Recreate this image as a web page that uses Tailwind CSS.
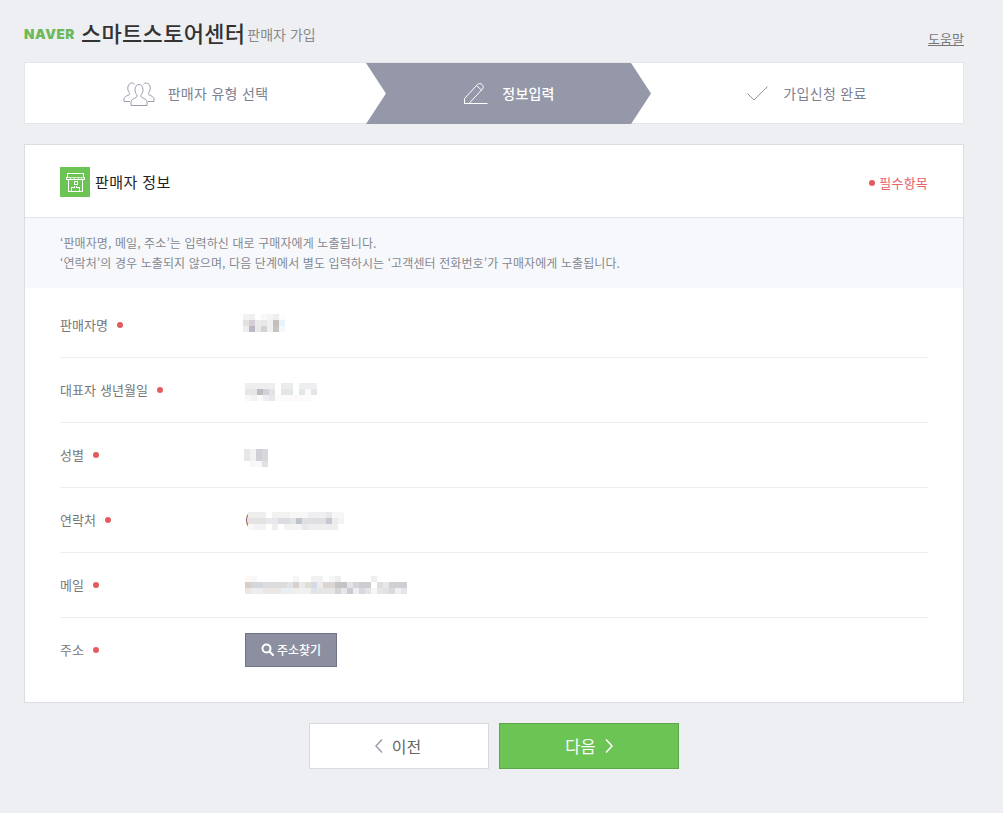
<!DOCTYPE html>
<html lang="ko">
<head>
    <meta charset="UTF-8">
    <title>스마트스토어센터 판매자 가입</title>
    <script src="https://cdn.jsdelivr.net/npm/@tailwindcss/browser@4"></script>
</head>
<body class="bg-[#eeeff3] font-['Noto_Sans_CJK_KR','Noto_Sans',sans-serif] text-[13px] text-[#777]">
<div class="w-[940px] ml-6 h-[813px]">

    <!-- header -->
    <header class="h-[62px] flex items-start">
        <span class="mt-[24px] w-[57px] font-['Inter',sans-serif] font-black text-[13.5px] leading-[20px] tracking-[0.6px] text-[#6cb85a]">NAVER</span>
        <h1 class="mt-[17px] text-[22px] leading-[30px] font-medium text-[#333] tracking-[0.3px]">스마트스토어센터</h1>
        <span class="mt-[24px] ml-[2px] text-[14px] leading-[20px] text-[#888]">판매자 가입</span>
        <a class="ml-auto mt-[29px] text-[13px] leading-[20px] text-[#777] underline">도움말</a>
    </header>

    <!-- steps -->
    <nav class="h-[62px] flex bg-white border border-[#e5e6eb]">
        <div class="w-[341px] flex items-center justify-center gap-[13px]">
            <svg width="32" height="26" viewBox="0 0 32 26" fill="none" stroke="#9a9eae" stroke-width="1">
                <path d="M7 21.500H1v-2.500c0-2 2.500-3 5-4.200 .8-.4 .8-1.800 0-2.800-1-1.200-1.200-2.500-1.200-4 0-3 1.700-5 4-5 1.200 0 2.200 .5 3 1.500"/>
                <path d="M25 21.500h6v-2.500c0-2-2.500-3-5-4.200-.8-.4-.8-1.800 0-2.800 1-1.200 1.200-2.500 1.200-4 0-3-1.700-5-4-5-1.200 0-2.200 .5-3 1.500"/>
                <path d="M8 25.500v-3.500c0-2.300 3-3.500 5.500-4.700 .9-.5 .9-2 0-3-1.100-1.300-1.500-2.800-1.500-4.500 0-3.200 1.700-5.300 4-5.300s4 2.100 4 5.300c0 1.700-.4 3.200-1.500 4.500-.9 1-.9 2.500 0 3 2.500 1.200 5.500 2.400 5.500 4.700v3.500z"/>
            </svg>
            <span class="text-[14px] tracking-[0.3px] text-[#7d8190]">판매자 유형 선택</span>
        </div>
        <div class="w-[285px] -mb-px pl-[2px] bg-[#9498a8] flex items-center justify-center gap-[14px] [clip-path:polygon(0_0,93%_0,100%_50%,93%_100%,0_100%,7%_50%)]">
            <svg width="24" height="21" viewBox="0 0 24 21" fill="none" stroke="#fff" stroke-width="1">
                <path d="M.5 20.500V15.500L13.500 1.500c1.300-1.300 3-1.300 4.500 0s1.500 3 .5 4.500L5 20.500z"/>
                <path d="M13 3l5 4.500"/>
                <path d="M.5 20.500h23"/>
            </svg>
            <span class="text-[14px] tracking-[0.2px] font-medium text-white">정보입력</span>
        </div>
        <div class="flex-1 flex items-center justify-center gap-[15px]">
            <svg width="21" height="15" viewBox="0 0 21 15" fill="none" stroke="#8f93a3" stroke-width="1">
                <path d="M.5 7.500L7 14 20.500 .5"/>
            </svg>
            <span class="text-[14px] tracking-[0.3px] text-[#7d8190]">가입신청 완료</span>
        </div>
    </nav>

    <!-- seller info card -->
    <section class="mt-5 h-[559px] bg-white border border-[#dcdde2]">
        <div class="h-[73px] px-[35px] pt-[22px] flex items-start border-b border-[#e3e4e9]">
            <span class="w-[30px] h-[30px] bg-[#6bc454] flex items-center justify-center">
                <svg width="19" height="19" viewBox="0 0 19 19" fill="none" stroke="#fff" stroke-width="1" shape-rendering="crispEdges">
                    <path d="M1.500 .5h16v4h1v2h-18v-2h1z"/>
                    <path d="M.5 4.500h18" stroke-opacity=".7"/>
                    <path d="M4.500 4.500v2M8.500 4.500v2M12.500 4.500v2M15.500 4.500v2" stroke-opacity=".7"/>
                    <path d="M2.500 6.500v12h14v-12"/>
                    <path d="M8 8.500h3v3h-3z"/>
                    <path d="M5.500 18v-3.500h3v-1.500M13.500 18v-3.500h-3v-1.500"/>
                </svg>
            </span>
            <h2 class="ml-[5px] text-[15px] tracking-[0.4px] leading-[30px] text-[#222]">판매자 정보</h2>
            <span class="ml-auto mt-[5px] flex items-center gap-[4px] text-[13px] tracking-[0.2px] leading-[22px] text-[#e8626b]">
                <i class="w-[6px] h-[6px] rounded-full bg-[#e25b60]"></i>필수항목
            </span>
        </div>

        <div class="h-[70px] px-[35px] pt-[15px] bg-[#f7f8fc] text-[12px] tracking-[0.1px] leading-[20px] text-[#85888f]">
            <p>‘판매자명, 메일, 주소’는 입력하신 대로 구매자에게 노출됩니다.</p>
            <p>‘연락처’의 경우 노출되지 않으며, 다음 단계에서 별도 입력하시는 ‘고객센터 전화번호’가 구매자에게 노출됩니다.</p>
        </div>

        <div class="px-[35px]">
            <div class="h-[70px] pt-[5px] flex items-center border-b border-[#eeeeee]">
                <div class="w-[185px] flex items-center gap-[9px]">판매자명 <i class="w-[6px] h-[6px] rounded-full bg-[#e25b60]"></i></div>
                <svg class="-ml-[2px] -mt-[4px]" width="42" height="18" shape-rendering="crispEdges">
                    <rect width="6" height="6" fill="#f3f2f3"/><rect x="6" width="6" height="6" fill="#efeef0"/><rect x="18" width="6" height="6" fill="#f9f9f9"/><rect x="24" width="6" height="6" fill="#f4f4f4"/><rect x="30" width="6" height="6" fill="#efeeec"/><rect x="36" width="6" height="6" fill="#fafcfd"/>
                    <rect y="6" width="6" height="6" fill="#e3e2df"/><rect x="6" y="6" width="6" height="6" fill="#d3ced5"/><rect x="12" y="6" width="6" height="6" fill="#ecebec"/><rect x="18" y="6" width="6" height="6" fill="#e8e8e8"/><rect x="24" y="6" width="6" height="6" fill="#f0f0f0"/><rect x="30" y="6" width="6" height="6" fill="#c3bfb9"/><rect x="36" y="6" width="6" height="6" fill="#e8f2fa"/>
                    <rect y="12" width="6" height="6" fill="#eeeeee"/><rect x="6" y="12" width="6" height="6" fill="#bbb8c3"/><rect x="12" y="12" width="6" height="6" fill="#e8eae9"/><rect x="18" y="12" width="6" height="6" fill="#d2d3d3"/><rect x="24" y="12" width="6" height="6" fill="#f0f0ef"/><rect x="30" y="12" width="6" height="6" fill="#c6c4c2"/><rect x="36" y="12" width="6" height="6" fill="#f2f8fc"/>
                </svg>
            </div>
            <div class="h-[65px] flex items-center border-b border-[#eeeeee]">
                <div class="w-[185px] flex items-center gap-[9px] tracking-[0.1px]">대표자 생년월일 <i class="w-[6px] h-[6px] rounded-full bg-[#e25b60]"></i></div>
                <svg class="mt-[4px]" width="72" height="18" shape-rendering="crispEdges">
                    <rect width="30" height="6" fill="#eeeeee"/><rect x="36" width="12" height="6" fill="#eaecec"/><rect x="54" width="18" height="6" fill="#eeeef1"/>
                    <rect width="12" y="6" height="6" fill="#e6e6e4"/><rect x="12" y="6" width="6" height="6" fill="#bdbdbf"/><rect x="18" y="6" width="6" height="6" fill="#d0d1d9"/><rect x="24" y="6" width="6" height="6" fill="#e2e3e3"/><rect x="36" y="6" width="12" height="6" fill="#e2e6e7"/><rect x="54" y="6" width="6" height="6" fill="#e2e8e8"/><rect x="60" y="6" width="6" height="6" fill="#fafaf8"/><rect x="66" y="6" width="6" height="6" fill="#e4e5ec"/>
                    <rect y="12" width="6" height="6" fill="#f8f8f8"/><rect x="6" y="12" width="6" height="6" fill="#f2f2f2"/><rect x="12" y="12" width="6" height="6" fill="#fafafa"/><rect x="18" y="12" width="6" height="6" fill="#edeef0"/><rect x="24" y="12" width="6" height="6" fill="#e8e8ea"/><rect x="30" y="12" width="36" height="6" fill="#fbfbfb"/>
                </svg>
            </div>
            <div class="h-[65px] flex items-center border-b border-[#eeeeee]">
                <div class="w-[185px] flex items-center gap-[9px]">성별 <i class="w-[6px] h-[6px] rounded-full bg-[#e25b60]"></i></div>
                <svg class="-ml-px mt-[6px]" width="24" height="18" shape-rendering="crispEdges">
                    <rect width="6" height="12" fill="#e8e6e7"/><rect x="6" width="6" height="12" fill="#f2f2f2"/><rect x="12" width="6" height="12" fill="#cfcfd8"/><rect x="18" width="6" height="12" fill="#d8d8dc"/>
                    <rect x="6" y="12" width="12" height="6" fill="#f8f8f8"/><rect x="18" y="12" width="6" height="6" fill="#e0e0e6"/>
                </svg>
            </div>
            <div class="h-[65px] flex items-center border-b border-[#eeeeee]">
                <div class="w-[185px] flex items-center gap-[9px]">연락처 <i class="w-[6px] h-[6px] rounded-full bg-[#e25b60]"></i></div>
                <span class="w-[3px] text-[12px] leading-[18px] text-[#446]">(</span>
                <svg class="mt-[2px]" width="96" height="18" shape-rendering="crispEdges">
                    <rect width="18" height="6" fill="#eeeeee"/><rect x="24" width="18" height="6" fill="#f2f2f2"/><rect x="42" width="18" height="6" fill="#f7f7f7"/><rect x="60" width="18" height="6" fill="#efeff1"/><rect x="78" width="6" height="6" fill="#e8e8ea"/><rect x="84" width="12" height="6" fill="#f6f6f8"/>
                    <rect y="6" width="18" height="6" fill="#e4e3e2"/><rect x="18" y="6" width="12" height="6" fill="#e8e8ec"/><rect x="30" y="6" width="12" height="6" fill="#dcdde0"/><rect x="42" y="6" width="6" height="6" fill="#e4e4e4"/><rect x="48" y="6" width="6" height="6" fill="#bfc4cc"/><rect x="54" y="6" width="12" height="6" fill="#dfe0e4"/><rect x="66" y="6" width="12" height="6" fill="#dfdfdf"/><rect x="78" y="6" width="6" height="6" fill="#c4c8d0"/><rect x="84" y="6" width="6" height="6" fill="#ececec"/><rect x="90" y="6" width="6" height="6" fill="#f3f3f5"/>
                    <rect y="12" width="6" height="6" fill="#f8f8f8"/><rect x="6" y="12" width="12" height="6" fill="#f3f3f5"/><rect x="24" y="12" width="6" height="6" fill="#eeeeee"/><rect x="36" y="12" width="18" height="6" fill="#f3f3f3"/><rect x="54" y="12" width="6" height="6" fill="#e8e8ea"/><rect x="60" y="12" width="30" height="6" fill="#eeeeef"/>
                </svg>
            </div>
            <div class="h-[65px] flex items-center border-b border-[#eeeeee]">
                <div class="w-[185px] flex items-center gap-[9px]">메일 <i class="w-[6px] h-[6px] rounded-full bg-[#e25b60]"></i></div>
                <svg width="162" height="18" shape-rendering="crispEdges">
                    <rect width="6" height="6" fill="#fdf9f5"/><rect x="6" width="6" height="6" fill="#f6f8fb"/><rect x="48" width="6" height="6" fill="#f6f6f6"/><rect x="66" width="12" height="6" fill="#f2f2f2"/><rect x="84" width="6" height="6" fill="#f6f6f6"/><rect x="90" width="6" height="6" fill="#eeeeee"/><rect x="126" width="6" height="6" fill="#eeeeee"/>
                    <rect y="6" width="6" height="6" fill="#d8cfc9"/><rect x="6" y="6" width="12" height="6" fill="#d3d8dc"/><rect x="18" y="6" width="24" height="6" fill="#dcdcde"/><rect x="42" y="6" width="6" height="6" fill="#e0e4e8"/><rect x="48" y="6" width="6" height="6" fill="#d8d0cc"/><rect x="54" y="6" width="6" height="6" fill="#eaeaea"/><rect x="60" y="6" width="6" height="6" fill="#e0dcd8"/><rect x="66" y="6" width="6" height="6" fill="#d2dce6"/><rect x="72" y="6" width="6" height="6" fill="#ececec"/><rect x="78" y="6" width="12" height="6" fill="#dbd5d3"/><rect x="90" y="6" width="12" height="6" fill="#c4c4c6"/><rect x="102" y="6" width="6" height="6" fill="#e4e4e8"/><rect x="108" y="6" width="6" height="6" fill="#d4d4d8"/><rect x="114" y="6" width="12" height="6" fill="#cdcdd0"/><rect x="132" y="6" width="6" height="6" fill="#dedede"/><rect x="138" y="6" width="6" height="6" fill="#e8e8e8"/><rect x="144" y="6" width="18" height="6" fill="#d0d0d4"/>
                    <rect y="12" width="6" height="6" fill="#ece6e0"/><rect x="6" y="12" width="12" height="6" fill="#eeeef0"/><rect x="18" y="12" width="18" height="6" fill="#e9e8e4"/><rect x="36" y="12" width="12" height="6" fill="#eaeff3"/><rect x="48" y="12" width="24" height="6" fill="#f0f0f0"/><rect x="66" y="12" width="6" height="6" fill="#dfe4ea"/><rect x="72" y="12" width="18" height="6" fill="#e6e6e6"/><rect x="90" y="12" width="6" height="6" fill="#d4d4d6"/><rect x="96" y="12" width="6" height="6" fill="#e6e6e8"/><rect x="102" y="12" width="6" height="6" fill="#c8ccd4"/><rect x="108" y="12" width="6" height="6" fill="#eeeeee"/><rect x="114" y="12" width="6" height="6" fill="#d8d8e0"/><rect x="120" y="12" width="6" height="6" fill="#e4e4e8"/><rect x="126" y="12" width="6" height="6" fill="#f8f6f2"/><rect x="132" y="12" width="6" height="6" fill="#e6e6e6"/><rect x="138" y="12" width="6" height="6" fill="#e2e2e6"/><rect x="144" y="12" width="6" height="6" fill="#dadade"/><rect x="150" y="12" width="6" height="6" fill="#f0f0f2"/><rect x="156" y="12" width="6" height="6" fill="#e6e6ea"/>
                </svg>
            </div>
            <div class="h-[63px] flex items-center">
                <div class="w-[185px] flex items-center gap-[9px]">주소 <i class="w-[6px] h-[6px] rounded-full bg-[#e25b60]"></i></div>
                <button class="w-[92px] h-[34px] bg-[#8b8f9f] border border-[#6f7488] flex items-center justify-center gap-[3px] text-[12px] font-medium text-white">
                    <svg width="13" height="13" viewBox="0 0 13 13" fill="none" stroke="#fff" stroke-width="2">
                        <circle cx="5.500" cy="5.500" r="4"/>
                        <path d="M8.500 8.500l3.500 3.500" stroke-linecap="round"/>
                    </svg>
                    주소찾기
                </button>
            </div>
        </div>
    </section>

    <!-- actions -->
    <div class="mt-5 flex justify-center gap-[10px]">
        <button class="w-[180px] h-[46px] pr-[2px] bg-white border border-[#d9dae0] flex items-center justify-center gap-[9px] text-[16px] text-[#666]">
            <svg width="8" height="14" viewBox="0 0 8 14" fill="none" stroke="#9a9eae" stroke-width="1.500"><path d="M7 .5L1 7l6 6.500"/></svg>
            이전
        </button>
        <button class="w-[180px] h-[46px] bg-[#6bc454] border border-[#5ca749] flex items-center justify-center gap-[9px] text-[16.5px] text-white">
            다음
            <svg width="8" height="14" viewBox="0 0 8 14" fill="none" stroke="#fff" stroke-width="1.500"><path d="M1 .5L7 7l-6 6.500"/></svg>
        </button>
    </div>
</div>
</body>
</html>
